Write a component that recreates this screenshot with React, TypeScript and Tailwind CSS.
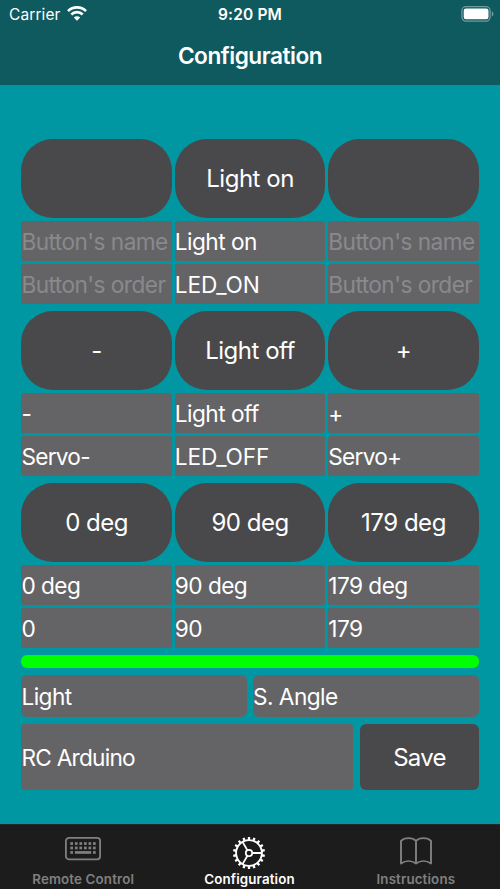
import React from "react";

type Cell = { title: string; name: string; order: string };

const groups: Cell[][] = [
  [
    { title: "", name: "", order: "" },
    { title: "Light on", name: "Light on", order: "LED_ON" },
    { title: "", name: "", order: "" },
  ],
  [
    { title: "-", name: "-", order: "Servo-" },
    { title: "Light off", name: "Light off", order: "LED_OFF" },
    { title: "+", name: "+", order: "Servo+" },
  ],
  [
    { title: "0 deg", name: "0 deg", order: "0" },
    { title: "90 deg", name: "90 deg", order: "90" },
    { title: "179 deg", name: "179 deg", order: "179" },
  ],
];

function Field({ value, placeholder, className = "" }: { value: string; placeholder?: string; className?: string }) {
  const tracking = value.startsWith("LED")
    ? "tracking-[-0.15px]"
    : value.startsWith("RC") || value.startsWith("Servo")
      ? "tracking-[-0.75px]"
      : "tracking-[-0.55px]";
  return (
    <div
      className={`flex items-center overflow-hidden whitespace-nowrap bg-[#646466] pt-[1.4px] text-[22.67px] ${tracking} ${
        value ? "text-white" : "text-[#89898d]"
      } ${className}`}
    >
      {value || placeholder}
    </div>
  );
}

function StatusBar() {
  return (
    <div className="grid h-[29px] grid-cols-3 items-center text-[15.5px] leading-none">
      <div className="flex items-center gap-[6px] pl-[9px]">
        <span className="tracking-[0.1px]">Carrier</span>
        <svg className="-translate-y-px" width="20" height="15" viewBox="0 0 20 15" fill="none" stroke="white" strokeWidth="2.7">
          <path d="M1 5.1C6 .2 14 .2 19 5.1" />
          <path d="M4.3 8.5C7.5 5.4 12.5 5.4 15.7 8.5" />
          <path d="M10 14.7 6.8 11.4C8.6 9.8 11.4 9.8 13.2 11.4Z" fill="white" stroke="none" />
        </svg>
      </div>
      <span className="text-center font-semibold tracking-[0.15px]">9:20 PM</span>
      <div className="flex justify-end pr-[6.5px]">
        <svg className="-translate-y-px" width="33" height="16" viewBox="0 0 33 16">
          <rect x=".9" y=".7" width="28.2" height="14.4" rx="4" fill="none" stroke="#6f9b9e" strokeWidth="1.3" />
          <rect x="2.7" y="2.5" width="24.8" height="10.8" rx="2.2" fill="white" />
          <path d="M30.8 5.3c2.2.8 2.2 4.4 0 5.2Z" fill="#6f9b9e" />
        </svg>
      </div>
    </div>
  );
}

function KeyboardIcon() {
  return (
    <svg className="mb-[7px]" width="36" height="24" viewBox="0 0 36 24" fill="#808080">
      <rect x=".9" y=".9" width="34.2" height="21.4" rx="3" fill="none" stroke="#808080" strokeWidth="1.8" />
      {[5.2, 9.6, 14.1].map((y) =>
        [5.3, 9.9, 14.4, 19, 23.5, 28].map((x) =>
          y < 14 || x === 5.3 || x === 28 ? <rect key={`${x}-${y}`} x={x} y={y} width="2.7" height="2.7" /> : null
        )
      )}
      <rect x="9.9" y="14.1" width="16.3" height="2.7" />
    </svg>
  );
}

function GearIcon() {
  return (
    <svg width="34" height="34" viewBox="-17 -17 34 34" fill="none" stroke="white">
      <circle r="12.9" strokeWidth="1.9" />
      <circle r="3.2" strokeWidth="1.8" />
      <path d="M3 0H12.5M-1.6-2.7-6.3-10.9M-1.6 2.7-6.3 10.9" strokeWidth="1.8" />
      {Array.from({ length: 18 }, (_, i) => (
        <path key={i} d="M13 0H16" strokeWidth="2.3" transform={`rotate(${i * 20 + 10})`} />
      ))}
    </svg>
  );
}

function BookIcon() {
  return (
    <svg className="mb-[4px]" width="32" height="28" viewBox="0 0 32 28" fill="none" stroke="#808080" strokeWidth="1.9" strokeLinejoin="round" strokeLinecap="round">
      <path d="M16 3.8C12.5.2 4.5.2 1 3.8V26.5C5.5 23.3 11.5 23.3 16 26.5C20.5 23.3 26.5 23.3 31 26.5V3.8C27.5.2 19.5.2 16 3.8V26.5" />
    </svg>
  );
}

function Tab({ icon, label, active }: { icon: React.ReactNode; label: string; active?: boolean }) {
  return (
    <div className={`flex flex-1 flex-col items-center ${active ? "text-white" : "text-[#808080]"}`}>
      <div className="flex h-[46px] items-center pt-[9px]">{icon}</div>
      <span className="whitespace-nowrap text-[13.33px] font-semibold leading-4 tracking-[0.15px]">{label}</span>
    </div>
  );
}

export default function App() {
  return (
    <div className="flex h-[889px] w-[500px] flex-col overflow-hidden bg-[#0097a2] font-['Inter','Liberation_Sans',sans-serif] text-white">
      <header className="h-[86px] shrink-0 border-b border-[#27858a] bg-[#0f5a5e]">
        <StatusBar />
        <h1 className="pt-[11px] text-center text-[22.67px] font-semibold leading-8 tracking-[-0.5px]">Configuration</h1>
      </header>
      <main className="flex flex-1 flex-col gap-[6.67px] pl-[21.4px] pr-[21.3px] pt-[52.8px]">
        {groups.map((cells, g) => (
          <section key={g} className="grid grid-cols-3 gap-x-[3px]">
            {cells.map((cell, i) => (
              <div key={i} className="flex min-w-0 flex-col gap-[2.9px]">
                <button className="h-[79.7px] rounded-[32px] bg-[#49494b] pt-[1.4px] text-[24px] tracking-[-0.48px]">
                  {cell.title}
                </button>
                <Field value={cell.name} placeholder="Button's name" className="h-[39.9px] rounded-[3px]" />
                <Field value={cell.order} placeholder="Button's order" className="h-[39.9px] rounded-[3px]" />
              </div>
            ))}
          </section>
        ))}
        <div className="h-[13.6px] shrink-0 rounded-[6px] bg-[#00ff00]" />
        <div className="grid grid-cols-2 gap-[6px]">
          <Field value="Light" className="h-[42.67px] rounded-[6px]" />
          <Field value="S. Angle" className="h-[42.67px] rounded-[6px]" />
        </div>
        <div className="flex h-[66.3px] gap-[6.67px]">
          <Field value="RC Arduino" className="flex-1 rounded-[3px]" />
          <button className="w-[118.6px] rounded-[6px] bg-[#49494b] pt-px text-[24px] tracking-[-0.8px]">
            Save
          </button>
        </div>
      </main>
      <nav className="flex h-[65px] shrink-0 border-t border-[#242929] bg-[#1c1c1c] pr-px">
        <Tab icon={<KeyboardIcon />} label="Remote Control" />
        <Tab icon={<GearIcon />} label="Configuration" active />
        <Tab icon={<BookIcon />} label="Instructions" />
      </nav>
    </div>
  );
}
